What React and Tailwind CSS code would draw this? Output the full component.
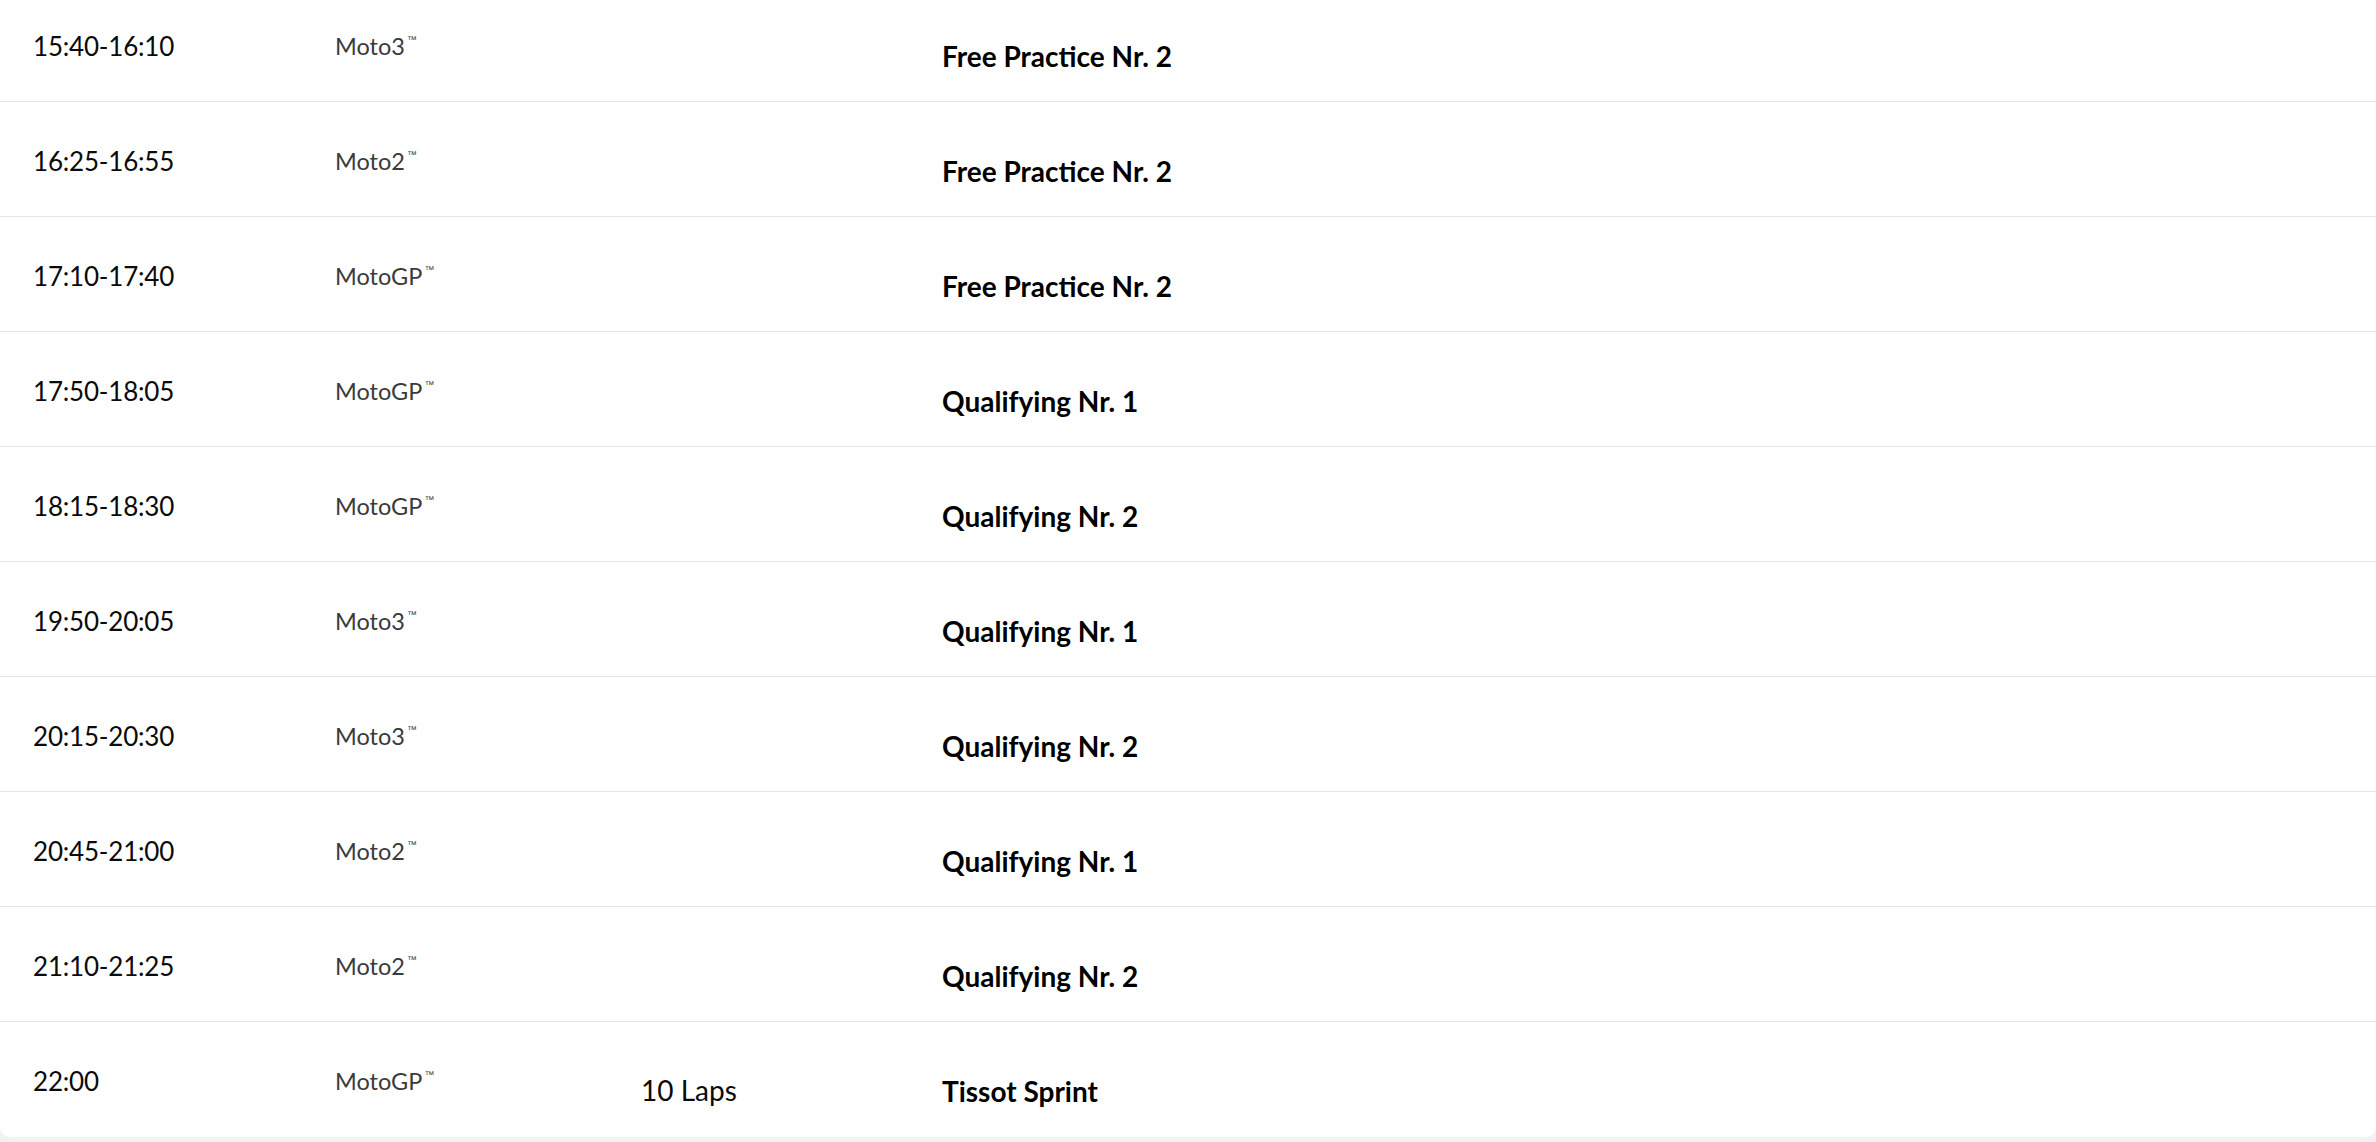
import React from "react";

const rows = [
  ["15:40-16:10", "Moto3", "", "Free Practice Nr. 2"],
  ["16:25-16:55", "Moto2", "", "Free Practice Nr. 2"],
  ["17:10-17:40", "MotoGP", "", "Free Practice Nr. 2"],
  ["17:50-18:05", "MotoGP", "", "Qualifying Nr. 1"],
  ["18:15-18:30", "MotoGP", "", "Qualifying Nr. 2"],
  ["19:50-20:05", "Moto3", "", "Qualifying Nr. 1"],
  ["20:15-20:30", "Moto3", "", "Qualifying Nr. 2"],
  ["20:45-21:00", "Moto2", "", "Qualifying Nr. 1"],
  ["21:10-21:25", "Moto2", "", "Qualifying Nr. 2"],
  ["22:00", "MotoGP", "10 Laps", "Tissot Sprint"],
];

function Row({ r, first, last }) {
  return (
    <div
      className={
        "grid grid-cols-[302px_306px_301px_1fr] pl-[33px] " +
        (first ? "h-[102px] " : "h-[115px] ") +
        (last ? "" : "border-b border-[#e4e4e4]")
      }
    >
      <div className={(first ? "pt-[31px]" : "pt-[44px]") + " text-[26px] leading-[30px] text-[#0b0b0b] tracking-[-0.2px]"}>
        {r[0]}
      </div>
      <div className={(first ? "pt-[31px]" : "pt-[44px]") + " text-[23.5px] leading-[30px] text-[#3b3b3b]"}>
        {r[1]}
        <span className="inline-block align-top text-[10px] leading-[10px] ml-[2px] mt-[4px]" style={{ fontFamily: "'Liberation Sans', sans-serif" }}>™</span>
      </div>
      <div className={(first ? "pt-[41px]" : "pt-[53px]") + " text-[28px] leading-[30px] text-[#0b0b0b]"}>
        {r[2]}
      </div>
      <div className={(first ? "pt-[41px]" : "pt-[54px]") + " text-[28px] leading-[30px] font-bold text-black"}>
        {r[3]}
      </div>
    </div>
  );
}

export default function App() {
  return (
    <div className="w-[2376px] h-[1142px] overflow-hidden bg-[#f2f2f2]" style={{ fontFamily: "Lato, 'Liberation Sans', sans-serif" }}>
      <div className="bg-white rounded-b-[10px]">
        {rows.map((r, i) => (
          <Row key={i} r={r} first={i === 0} last={i === rows.length - 1} />
        ))}
      </div>
    </div>
  );
}
